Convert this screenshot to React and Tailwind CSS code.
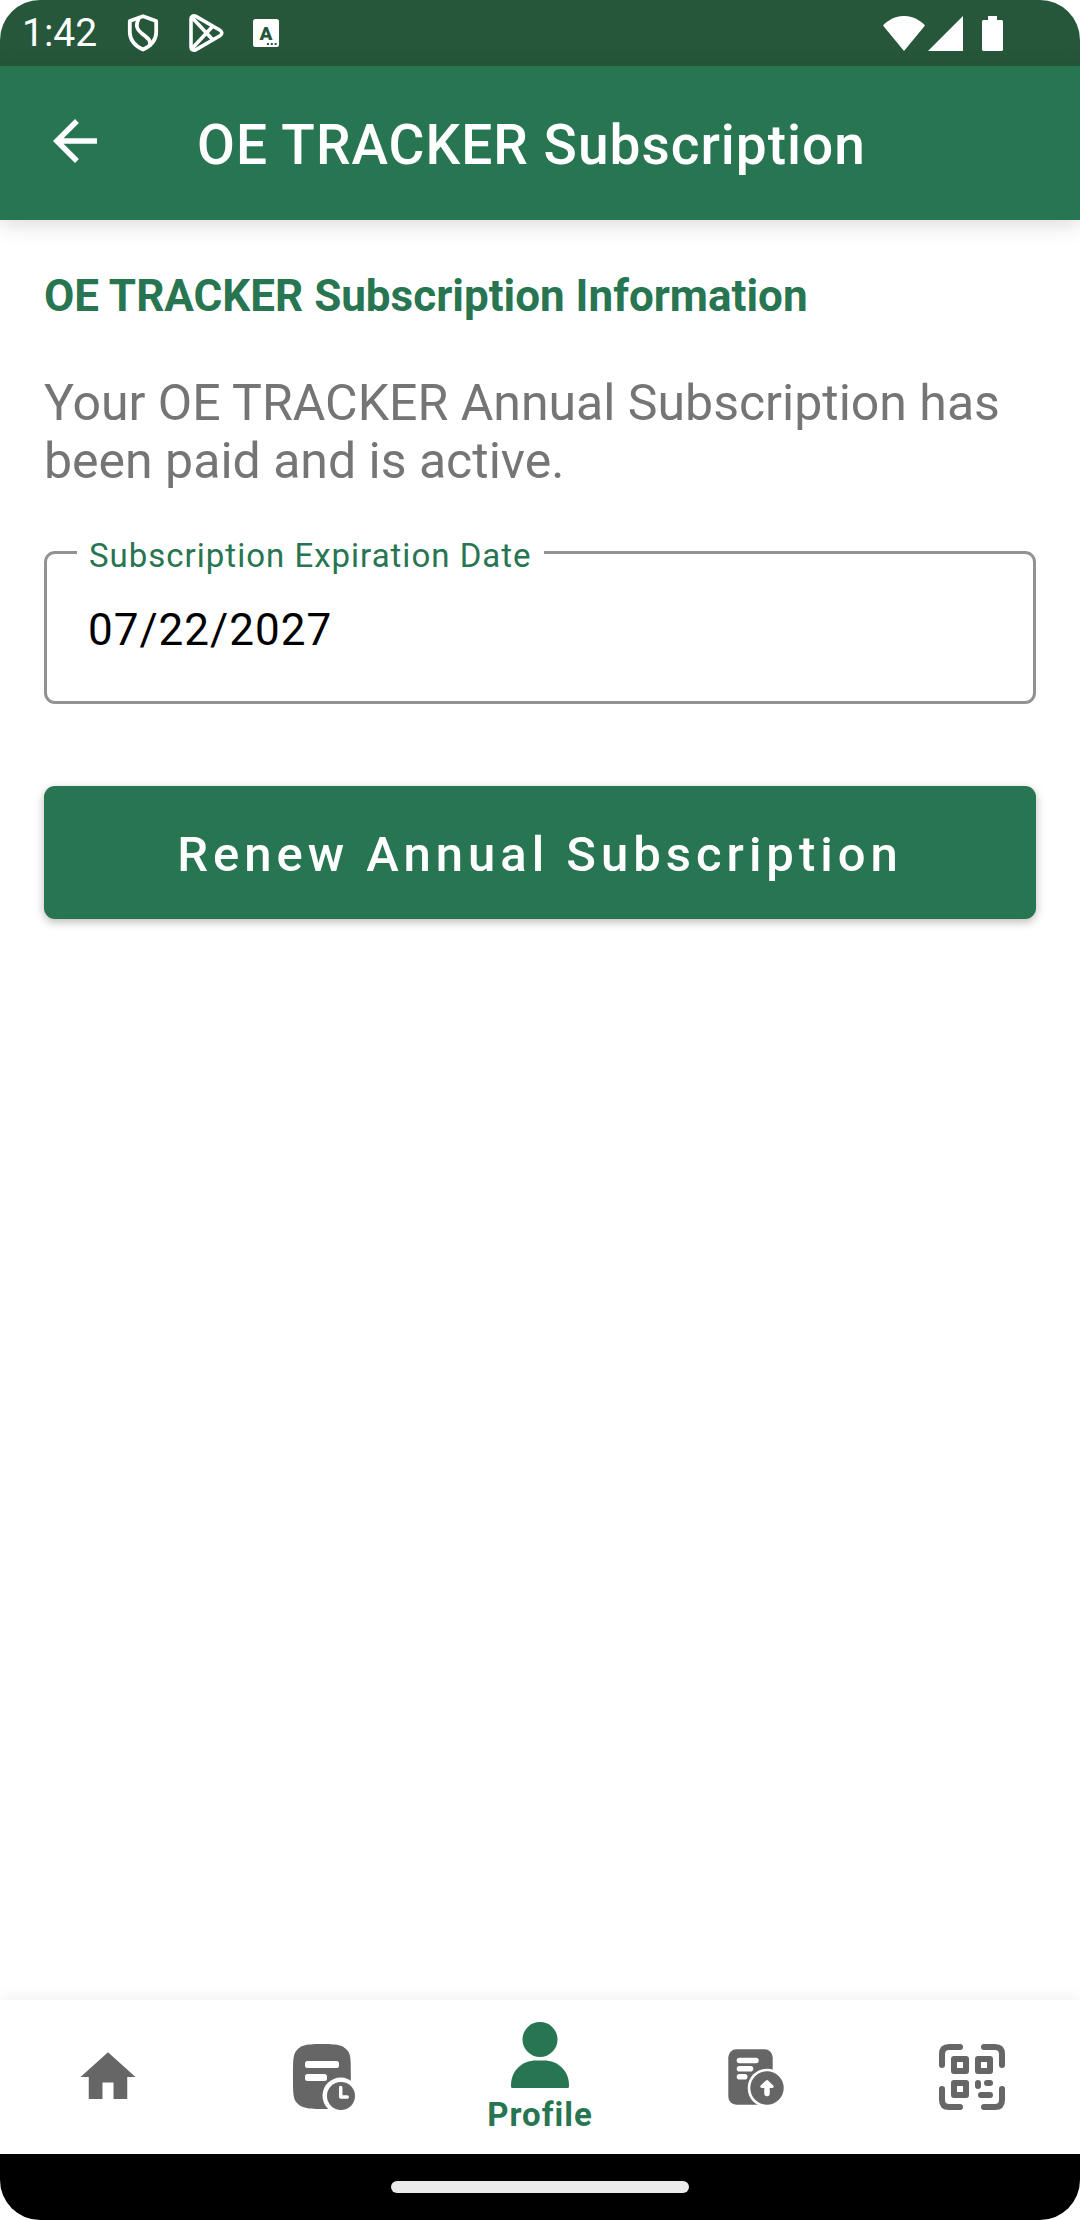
function ShieldIcon() {
  return (
    <svg viewBox="0 0 32 38" className="h-[38px] w-8" fill="none" stroke="currentColor" strokeWidth="3.8" strokeLinejoin="round" aria-hidden="true">
      <path d="M16 2.2 29.2 7v11.5c0 7-5 13.6-13.2 17C7.8 32.1 2.8 25.500 2.8 18.500V7z" />
      <path d="M12 4C8.500 11 9 15 15.500 20S24.500 27 22.500 32" />
    </svg>
  );
}

function PlayIcon() {
  return (
    <svg viewBox="0 0 36 40" className="h-10 w-9" fill="none" stroke="currentColor" strokeWidth="3.6" strokeLinejoin="round" aria-hidden="true">
      <path d="M3 6v28c0 3 2.500 4 5 2.600L32 22.800c2.400-1.500 2.400-4.100 0-5.600L8 3.400C5.500 2 3 3 3 6z" />
      <path d="M4 4.500 25 27M4 35.500 25 13" />
    </svg>
  );
}

function KeyboardIcon() {
  return (
    <svg viewBox="0 0 26 28" className="h-7 w-[26px]" aria-hidden="true">
      <rect width="26" height="28" rx="2.500" fill="currentColor" />
      <text x="13" y="20.500" textAnchor="middle" fontFamily="Roboto" fontWeight="900" fontSize="19" fill="#26573a">A</text>
      <path d="M14 24h2v2h-2zM17.800 24h2v2h-2zM21.600 24h2v2h-2z" fill="#26573a" />
    </svg>
  );
}

function StatusBar() {
  return (
    <div className="flex h-[66px] items-center justify-between bg-[#26573a] pr-[77px] pl-[22px] text-white">
      <div className="flex items-center">
        <span className="text-[39px] leading-[46px]">1:42</span>
        <div className="ml-[30px] flex items-center gap-[29px]">
          <ShieldIcon />
          <PlayIcon />
          <KeyboardIcon />
        </div>
      </div>
      <div className="flex items-center">
        <svg viewBox="0 0 42 35" className="h-[35px] w-[42px]" fill="currentColor" aria-hidden="true">
          <path d="M0 9.500C12-3.200 30-3.200 42 9.500L21 35z" />
        </svg>
        <svg viewBox="0 0 35 35" className="ml-[3px] h-[35px] w-[35px]" fill="currentColor" aria-hidden="true">
          <path d="M0 35 35 0v35z" />
        </svg>
        <svg viewBox="0 0 21 35" className="ml-[19px] h-[35px] w-[21px]" fill="currentColor" aria-hidden="true">
          <path d="M6 0h9v4h5l1 1v29l-1 1H1l-1-1V5l1-1h5z" />
        </svg>
      </div>
    </div>
  );
}

function HomeIcon() {
  return (
    <svg viewBox="0 0 24 24" className="size-[66px]" fill="currentColor" aria-hidden="true">
      <path d="M10 20v-6h4v6h5v-8h3L12 3 2 12h3v8z" />
    </svg>
  );
}

function HistoryIcon() {
  return (
    <svg viewBox="0 0 66 66" className="size-[66px]" fill="currentColor" aria-hidden="true">
      <path d="M31 0C50 0 52 2 56 6s3.800 10 3.800 26.500S60 55 56 59s-8 6-25 6-21-2-25-6-4-10-4-26.500S2 10 6 6 12 0 31 0z" />
      <g fill="white">
        <rect x="14" y="17" width="34" height="7" rx="2.500" />
        <rect x="14" y="30" width="22" height="7" rx="2.500" />
        <circle cx="49.700" cy="51.700" r="18.200" />
      </g>
      <circle cx="50" cy="52" r="14" />
      <path d="M49.700 43.500V53h6.500" fill="none" stroke="white" strokeWidth="3.500" strokeLinecap="round" strokeLinejoin="round" />
    </svg>
  );
}

function ProfileIcon() {
  return (
    <svg viewBox="0 0 66 66" className="size-[66px]" fill="currentColor" aria-hidden="true">
      <circle cx="33" cy="17.500" r="17.500" />
      <path d="M4 64.500V63C4 49 15 38.500 29 38.500h8C51 38.500 62 49 62 63v1.500q0 1.500-1.500 1.500h-55Q4 66 4 64.500z" />
    </svg>
  );
}

function UploadIcon() {
  return (
    <svg viewBox="0 0 66 66" className="size-[66px]" fill="currentColor" aria-hidden="true">
      <rect x="5.300" y="5.300" width="44.400" height="55.400" rx="8" />
      <g fill="white">
        <rect x="13.700" y="13.700" width="22" height="5.600" rx="2.800" />
        <rect x="13.700" y="22" width="16.600" height="5.600" rx="2.800" />
        <rect x="13.700" y="30" width="10.800" height="5.600" rx="2.800" />
        <circle cx="44" cy="44" r="19.300" />
      </g>
      <circle cx="44" cy="44" r="16.700" />
      <path d="M44 37.500 38.800 42.500h10.400z" fill="white" stroke="white" strokeWidth="3" strokeLinejoin="round" />
      <path d="M44 40v9.500" stroke="white" strokeWidth="5.500" strokeLinecap="round" />
    </svg>
  );
}

function QrIcon() {
  return (
    <svg viewBox="0 0 66 66" className="size-[66px]" fill="none" stroke="currentColor" strokeWidth="6" strokeLinecap="round" strokeLinejoin="round" aria-hidden="true">
      <path d="M3 21V10q0-7 7-7h11M45 3h11q7 0 7 7v11M63 45v11q0 7-7 7H45M21 63H10q-7 0-7-7V45" />
      <path d="M15 15h12v12H15zM39 15h12v12H39zM15 39h12v12H15z" />
      <path d="M39 39v3M48 39h3M42 51h9" />
    </svg>
  );
}

const tabs = [
  { name: "Home", Icon: HomeIcon },
  { name: "History", Icon: HistoryIcon },
  { name: "Profile", Icon: ProfileIcon, active: true },
  { name: "Upload", Icon: UploadIcon },
  { name: "Scan", Icon: QrIcon },
];

export default function App() {
  return (
    <div className="flex min-h-screen flex-col overflow-hidden rounded-[40px] bg-white font-[Roboto,sans-serif]">
      <StatusBar />
      <header className="flex items-start bg-[#277551] px-[42px] pt-[42px] pb-[46px] text-white shadow-[0_4px_20px_rgba(0,0,0,0.15)]">
        <button type="button" aria-label="Back" className="size-[66px]">
          <svg viewBox="0 0 24 24" className="size-[66px]" fill="currentColor" aria-hidden="true">
            <path d="M20 11H7.830l5.590-5.590L12 4l-8 8 8 8 1.410-1.410L7.830 13H20z" />
          </svg>
        </button>
        <h1 className="ml-[89px] pt-2 text-[55px] leading-[58px] font-medium tracking-[1px]">OE TRACKER Subscription</h1>
      </header>

      <main className="flex-1 px-[44px] pt-[50px]">
        <h2 className="text-[44px] leading-[52px] font-bold text-[#277551]">OE TRACKER Subscription Information</h2>
        <p className="mt-[52px] text-[50px] leading-[58px] text-[#757575]">
          Your OE TRACKER Annual Subscription has been paid and is active.
        </p>
        <div className="relative mt-[61px] rounded-[11px] border-3 border-[#929292]">
          <label htmlFor="expiration" className="absolute -top-[18px] left-[30px] bg-white px-3 text-[33px] leading-[39px] tracking-[1px] text-[#277551]">
            Subscription Expiration Date
          </label>
          <input id="expiration" type="text" readOnly defaultValue="07/22/2027" className="block w-full bg-transparent px-[41px] pt-[50px] pb-[45px] text-[44px] leading-[52px] tracking-[1px] text-black outline-none" />
        </div>
        <button type="button" className="mt-[82px] block w-full rounded-[11px] bg-[#277551] pt-10 pb-[35px] text-[49px] leading-[58px] font-medium tracking-[5px] text-white shadow-[0_3px_10px_rgba(0,0,0,0.28)]">
          Renew Annual Subscription
        </button>
      </main>

      <nav className="grid h-[154px] grid-cols-5 shadow-[0_0_16px_rgba(0,0,0,0.08)]">
        {tabs.map(({ name, Icon, active }) => (
          <a
            key={name}
            href={"#" + name.toLowerCase()}
            aria-label={name}
            aria-current={active ? "page" : undefined}
            className={active ? "flex flex-col items-center justify-center pt-[2px] text-[#277551]" : "flex flex-col items-center justify-center text-[#666666]"}
          >
            <Icon />
            {active && <span className="mt-[7px] text-[33px] leading-[39px] font-bold tracking-[1px]">{name}</span>}
          </a>
        ))}
      </nav>

      <div className="flex h-[66px] items-center justify-center bg-black">
        <div className="h-3 w-[298px] rounded-full bg-[#ebebeb]" />
      </div>
    </div>
  );
}
